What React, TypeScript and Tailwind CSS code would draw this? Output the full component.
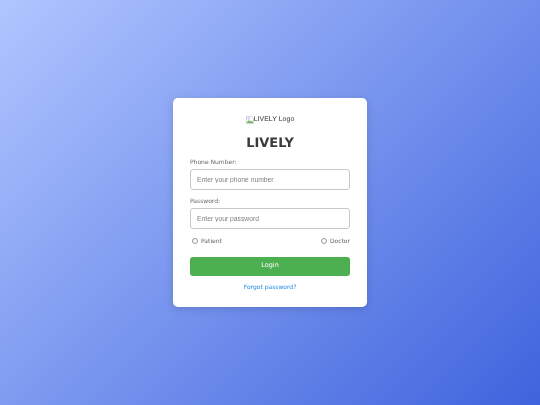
export default function App() {
  return (
    <div className="flex h-[405px] w-[540px] items-center justify-center overflow-hidden bg-[linear-gradient(135deg,#b0c6ff_0%,#3f63dd_100%)] font-['DejaVu_Sans',sans-serif] [text-rendering:geometricPrecision]">
      <div className="flex h-[209px] w-[194px] flex-col rounded-[5px] bg-white px-[17px] pt-[15px] shadow-[0_2px_8px_rgba(0,0,0,0.15)] blur-[0.3px]">
        {/* Logo with broken image */}
        <div className="flex h-[13px] items-center justify-center font-['Liberation_Sans',sans-serif] text-[7px] leading-[13px] text-[#333]">
          <svg width="8" height="8" viewBox="0 0 16 16" className="shrink-0">
            <path d="M1 1h10l4 4v10H1z" fill="#fff" stroke="#b0b4b8" strokeWidth="1.2" />
            <path d="M2 12l4-4 3 3 2-2 3 3v2H2z" fill="#7cb86c" />
            <path d="M3 3h5v4H3z" fill="#b6d0fa" />
          </svg>
          <span>LIVELY Logo</span>
        </div>

        <h1 className="mt-[10px] text-center text-[13px] font-bold leading-[16px] text-[#3a3a3a]">LIVELY</h1>

        <form className="mt-[6px] flex flex-col">
          <label className="text-[6px] leading-[9px] text-[#666]">Phone Number:</label>
          <input
            placeholder="Enter your phone number"
            className="mt-[2px] h-[21px] w-full rounded-[3px] border border-[#c8c8c8] bg-white px-[6px] font-['Liberation_Sans',sans-serif] text-[6.75px] outline-none placeholder:text-[#808080]"
          />

          <label className="mt-[7px] text-[6px] leading-[9px] text-[#666]">Password:</label>
          <input
            type="password"
            placeholder="Enter your password"
            className="mt-[2px] h-[21px] w-full rounded-[3px] border border-[#c8c8c8] bg-white px-[6px] font-['Liberation_Sans',sans-serif] text-[6.75px] outline-none placeholder:text-[#808080]"
          />

          <div className="mt-[8px] flex h-[9px] items-center justify-between pl-[2px] text-[6px] leading-[9px] text-[#666]">
            <div className="flex items-center gap-[3px]">
              <span className="mb-[1px] h-[6px] w-[6px] rounded-full border-[0.5px] border-[#999] bg-white" />
              <span>Patient</span>
            </div>
            <div className="flex items-center gap-[3px]">
              <span className="mb-[1px] h-[6px] w-[6px] rounded-full border-[0.5px] border-[#999] bg-white" />
              <span>Doctor</span>
            </div>
          </div>

          <button type="button" className="mt-[10.5px] h-[19.5px] w-full rounded-[3px] bg-[#4caf50] text-[6.5px] text-white">
            Login
          </button>

          <a className="mt-[6.5px] text-center text-[6px] leading-[9px] text-[#1e88e5]">Forgot password?</a>
        </form>
      </div>
    </div>
  );
}
